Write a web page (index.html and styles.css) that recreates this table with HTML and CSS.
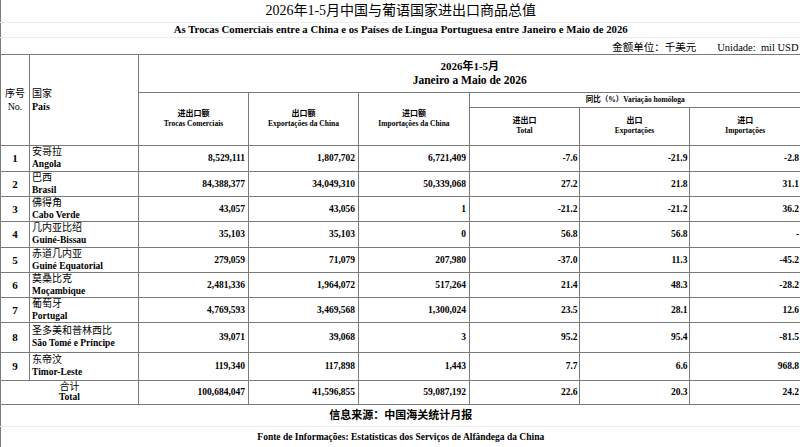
FILE: index.html
```html
<!DOCTYPE html>
<html lang="zh">
<head>
<meta charset="utf-8">
<title>2026年1-5月中国与葡语国家进出口商品总值</title>
<link rel="stylesheet" href="styles.css">
</head>
<body>
<table class="sheet">
  <colgroup>
    <col class="c-no"><col class="c-country"><col class="c-amt"><col class="c-amt"><col class="c-amt3"><col class="c-pct"><col class="c-pct"><col class="c-pct3">
  </colgroup>
  <tr class="r-title top"><td colspan="8" class="title">2026年1-5月中国与葡语国家进出口商品总值</td></tr>
  <tr class="r-sub top"><td colspan="8" class="subtitle">As Trocas Comerciais entre a China e os Países de Língua Portuguesa entre Janeiro e Maio de 2026</td></tr>
  <tr class="r-unit top unit-row"><td colspan="8" class="unit"><span>金额单位：千美元</span><span class="unit-pt">Unidade:&nbsp; mil USD</span></td></tr>

  <tr class="r-h1">
    <td rowspan="3" class="h-no"><div>序号</div><div>No.</div></td>
    <td rowspan="3" class="h-country"><div>国家</div><div class="b">País</div></td>
    <td colspan="6" class="h-period"><div class="p-cn">2026年1-5月</div><div class="p-pt">Janeiro a Maio de 2026</div></td>
  </tr>
  <tr class="r-h2">
    <td rowspan="2" class="h-sm"><div class="sm-cn">进出口额</div><div>Trocas Comerciais</div></td>
    <td rowspan="2" class="h-sm"><div class="sm-cn">出口额</div><div>Exportações da China</div></td>
    <td rowspan="2" class="h-sm"><div class="sm-cn">进口额</div><div>Importações da China</div></td>
    <td colspan="3" class="h-yoy">同比（%）Variação homóloga</td>
  </tr>
  <tr class="r-h3">
    <td class="h-sm"><div class="sm-cn">进出口</div><div>Total</div></td>
    <td class="h-sm"><div class="sm-cn">出口</div><div>Exportações</div></td>
    <td class="h-sm"><div class="sm-cn">进口</div><div>Importações</div></td>
  </tr>

  <tr class="r26 data"><td class="no">1</td><td class="ct"><div class="cn">安哥拉</div><div class="pt">Angola</div></td><td class="n">8,529,111</td><td class="n">1,807,702</td><td class="n">6,721,409</td><td class="p">-7.6</td><td class="p">-21.9</td><td class="p">-2.8</td></tr>
  <tr class="r25 data"><td class="no">2</td><td class="ct"><div class="cn">巴西</div><div class="pt">Brasil</div></td><td class="n">84,388,377</td><td class="n">34,049,310</td><td class="n">50,339,068</td><td class="p">27.2</td><td class="p">21.8</td><td class="p">31.1</td></tr>
  <tr class="r25 data"><td class="no">3</td><td class="ct"><div class="cn">佛得角</div><div class="pt">Cabo Verde</div></td><td class="n">43,057</td><td class="n">43,056</td><td class="n">1</td><td class="p">-21.2</td><td class="p">-21.2</td><td class="p">36.2</td></tr>
  <tr class="r26 data"><td class="no">4</td><td class="ct"><div class="cn">几内亚比绍</div><div class="pt">Guiné-Bissau</div></td><td class="n">35,103</td><td class="n">35,103</td><td class="n">0</td><td class="p">56.8</td><td class="p">56.8</td><td class="p">-</td></tr>
  <tr class="r25 data"><td class="no">5</td><td class="ct"><div class="cn">赤道几内亚</div><div class="pt">Guiné Equatorial</div></td><td class="n">279,059</td><td class="n">71,079</td><td class="n">207,980</td><td class="p">-37.0</td><td class="p">11.3</td><td class="p">-45.2</td></tr>
  <tr class="r25 data"><td class="no">6</td><td class="ct"><div class="cn">莫桑比克</div><div class="pt">Moçambique</div></td><td class="n">2,481,336</td><td class="n">1,964,072</td><td class="n">517,264</td><td class="p">21.4</td><td class="p">48.3</td><td class="p">-28.2</td></tr>
  <tr class="r25 data"><td class="no">7</td><td class="ct"><div class="cn">葡萄牙</div><div class="pt">Portugal</div></td><td class="n">4,769,593</td><td class="n">3,469,568</td><td class="n">1,300,024</td><td class="p">23.5</td><td class="p">28.1</td><td class="p">12.6</td></tr>
  <tr class="r30 data"><td class="no">8</td><td class="ct"><div class="cn">圣多美和普林西比</div><div class="pt">São Tomé e Príncipe</div></td><td class="n">39,071</td><td class="n">39,068</td><td class="n">3</td><td class="p">95.2</td><td class="p">95.4</td><td class="p">-81.5</td></tr>
  <tr class="r28 data"><td class="no">9</td><td class="ct"><div class="cn">东帝汶</div><div class="pt">Timor-Leste</div></td><td class="n">119,340</td><td class="n">117,898</td><td class="n">1,443</td><td class="p">7.7</td><td class="p">6.6</td><td class="p">968.8</td></tr>
  <tr class="r24 data"><td colspan="2" class="tot"><div class="cn">合计</div><div class="pt">Total</div></td><td class="n">100,684,047</td><td class="n">41,596,855</td><td class="n">59,087,192</td><td class="p">22.6</td><td class="p">20.3</td><td class="p">24.2</td></tr>

  <tr class="r-src foot"><td colspan="8" class="src">信息来源：中国海关统计月报</td></tr>
  <tr class="r-fonte foot foot-last"><td colspan="8" class="fonte">Fonte de Informações: Estatísticas dos Serviços de Alfândega da China</td></tr>
</table>
</body>
</html>
```

FILE: styles.css
```css
html, body {
  margin: 0;
  padding: 0;
  background: #ffffff;
}

body {
  font-family: "Liberation Serif", "Noto Sans CJK SC", serif;
  color: #000;
  font-size: 10px;
  line-height: 12px;
}

.sheet {
  border-collapse: collapse;
  table-layout: fixed;
  width: 800px;
}

.c-no { width: 29px; }
.c-country { width: 109px; }
.c-amt { width: 110px; }
.c-amt3 { width: 111px; }
.c-pct { width: 110px; }
.c-pct3 { width: 111px; }

.sheet td {
  padding: 0;
  border: 1px solid #7a7a7a;
  white-space: nowrap;
  overflow: hidden;
  vertical-align: middle;
}

.sheet tr > td:last-child {
  border-right: none;
}

/* top caption rows */
.top td {
  border-top: none;
  border-bottom: 1px solid #ececec;
}
.unit-row td {
  border-bottom: 1px solid #7a7a7a;
}

.r-title { height: 22px; }
.r-sub { height: 15px; }
.r-unit { height: 17px; }

.title {
  text-align: center;
  font-size: 14px;
  line-height: 16px;
}
.subtitle {
  text-align: center;
  font-weight: bold;
  font-size: 10.75px;
  line-height: 13px;
}
.unit {
  text-align: right;
  font-size: 10.5px;
  line-height: 13px;
  padding-right: 2px !important;
  padding-top: 3px !important;
}
.unit-pt {
  margin-left: 21px;
}

/* header */
.r-h1 { height: 38px; }
.r-h2 { height: 15px; }
.r-h3 { height: 38px; }

.h-no {
  text-align: center;
  font-size: 10px;
  line-height: 13px;
}
.h-country {
  text-align: left;
  font-size: 10px;
  line-height: 13px;
  padding-left: 2px !important;
}
.b { font-weight: bold; }

.h-period {
  text-align: center;
  font-weight: bold;
}
.p-cn {
  font-size: 11px;
  line-height: 14px;
}
.p-pt {
  font-size: 11.5px;
  line-height: 14px;
}

.h-sm {
  text-align: center;
  font-weight: bold;
  font-size: 7.5px;
  line-height: 10px;
}
.sm-cn {
  font-size: 8px;
}
.h-yoy {
  text-align: center;
  font-weight: bold;
  font-size: 7.5px;
  line-height: 10px;
}

/* data */
.r24 { height: 24px; }
.r25 { height: 25px; }
.r26 { height: 26px; }
.r28 { height: 28px; }
.r30 { height: 30px; }

.no {
  text-align: center;
  font-weight: bold;
  font-size: 11px;
}
.ct {
  padding-left: 2px !important;
}
.cn {
  font-size: 10px;
  line-height: 12px;
}
.pt {
  font-size: 9.5px;
  font-weight: bold;
  line-height: 12px;
}
.tot .cn,
.tot .pt {
  line-height: 11px;
}
.tot {
  text-align: center;
}
.n {
  text-align: right;
  font-weight: bold;
  font-size: 9.5px;
  padding-right: 3px !important;
}
.p {
  text-align: right;
  font-weight: bold;
  font-size: 9.5px;
  padding-right: 1.5px !important;
}

/* footer */
.foot td {
  border-bottom: 1px solid #ececec;
}
.foot-last td {
  border-top: none;
  border-bottom: none;
}
.r-src { height: 22px; }
.r-fonte { height: 21px; }

.src {
  text-align: center;
  font-weight: bold;
  font-size: 11px;
  line-height: 14px;
}
.fonte {
  text-align: center;
  font-weight: bold;
  font-size: 9.5px;
  line-height: 12px;
}
```
